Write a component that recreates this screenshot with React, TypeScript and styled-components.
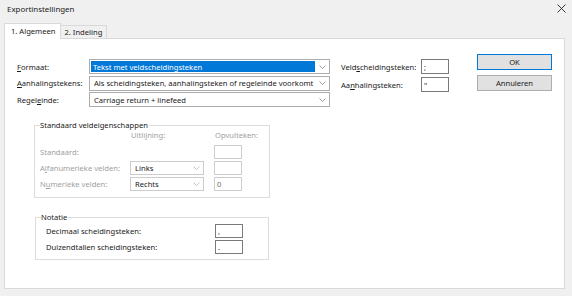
import React from "react";
import styled, { createGlobalStyle } from "styled-components";

const FONT = `"Noto Sans", "Open Sans", sans-serif`;
const FS = "7.6px";

const Global = createGlobalStyle`
  html, body { margin: 0; padding: 0; background: #f0f0f0; }
  body { font-family: ${FONT}; font-size: ${FS}; color: #1a1a1a; }
  * { box-sizing: border-box; }
`;

const Window = styled.div`
  width: 572px;
  height: 296px;
  display: flex;
  flex-direction: column;
  background: #f0f0f0;
  overflow: hidden;
`;

const TitleBar = styled.div`
  height: 19px;
  display: flex;
  align-items: center;
  justify-content: space-between;
  padding: 0 7px 2px 7px;
`;

const Title = styled.span`
  font-size: 7.9px;
`;

const TabStrip = styled.div`
  height: 20px;
  display: flex;
  align-items: flex-end;
  padding-left: 4px;
  margin-bottom: -1px;
  position: relative;
  z-index: 1;
`;

const Tab = styled.div<{ $active?: boolean }>`
  height: ${(p) => (p.$active ? "16px" : "13px")};
  margin-bottom: ${(p) => (p.$active ? "0" : "1px")};
  padding: ${(p) => (p.$active ? "2px 5px 0 6px" : "1px 4px 0 3px")};
  background: ${(p) => (p.$active ? "#fff" : "#f0f0f0")};
  border: 1px solid #d9d9d9;
  border-bottom: none;
  ${(p) => (p.$active ? "" : "border-left: none;")}
  white-space: nowrap;
`;

const Panel = styled.div`
  flex: 1;
  margin: 0 7px 7px 4px;
  background: #fff;
  border: 1px solid #d9d9d9;
  padding: 15px 0 0 12px;
  display: flex;
  flex-direction: column;
`;

const TopSection = styled.div`
  display: flex;
  align-items: flex-start;
`;

const FormGrid = styled.div`
  margin-top: 5px;
  display: grid;
  grid-template-columns: 72px 241px;
  grid-auto-rows: 15px;
  row-gap: 1.5px;
  align-items: center;
`;

const SideGrid = styled.div`
  margin-top: 5px;
  margin-left: 11px;
  display: grid;
  grid-template-columns: 80px 28px;
  grid-auto-rows: 15px;
  row-gap: 3px;
  align-items: center;
`;

const ButtonCol = styled.div`
  margin-left: 28px;
  width: 75px;
  display: flex;
  flex-direction: column;
  gap: 5px;
`;

const Button = styled.div<{ $default?: boolean }>`
  height: 16px;
  display: flex;
  align-items: center;
  justify-content: center;
  background: #e1e1e1;
  border: 1px solid ${(p) => (p.$default ? "#0078d7" : "#adadad")};
`;

const Label = styled.span<{ $disabled?: boolean }>`
  white-space: nowrap;
  color: ${(p) => (p.$disabled ? "#a0a0a0" : "#1a1a1a")};
  u { text-underline-offset: 1px; }
`;

const HeaderLabel = styled(Label)`
  align-self: start;
  padding-left: 1px;
`;

const SelectBox = styled.div<{ $disabled?: boolean }>`
  height: 100%;
  display: flex;
  align-items: center;
  border: 1px solid ${(p) => (p.$disabled ? "#cccccc" : "#acacac")};
  background: #fff;
  padding: 1px 0 1px 1px;
`;

const SelectText = styled.div<{ $highlight?: boolean }>`
  flex: 1;
  height: 100%;
  display: flex;
  align-items: center;
  padding-left: ${(p) => (p.$highlight ? "2px" : "3px")};
  margin-right: ${(p) => (p.$highlight ? "2px" : "0")};
  background: ${(p) => (p.$highlight ? "#0078d7" : "transparent")};
  color: ${(p) => (p.$highlight ? "#fff" : "#1a1a1a")};
  white-space: nowrap;
  overflow: hidden;
`;

const Chevron = styled.svg<{ $disabled?: boolean }>`
  width: 11px;
  height: 6px;
  flex: none;
  margin-right: 1px;
  stroke: ${(p) => (p.$disabled ? "#b8b8b8" : "#8a8a8a")};
`;

const TextBox = styled.div<{ $disabled?: boolean }>`
  height: 100%;
  border: 1px solid ${(p) => (p.$disabled ? "#cccccc" : "#7a7a7a")};
  background: #fff;
  display: flex;
  align-items: center;
  padding-left: 2px;
  color: ${(p) => (p.$disabled ? "#6d6d6d" : "#1a1a1a")};
`;

const Group = styled.fieldset<{ $left: number; $width: number; $top: number }>`
  margin: ${(p) => p.$top}px 0 0 ${(p) => p.$left}px;
  width: ${(p) => p.$width}px;
  border: 1px solid #dcdcdc;
  padding: 0;
  min-inline-size: 0;
`;

const Legend = styled.legend`
  margin-left: 5px;
  padding: 0 1px 0 0;
  line-height: 10px;
  white-space: nowrap;
`;

const GroupGrid1 = styled.div`
  display: grid;
  grid-template-columns: 90px 74px 10px 28px;
  grid-template-rows: 13px 14px 14px 14px;
  row-gap: 2px;
  align-items: center;
  padding: 0 0 6px 5px;
`;

const GroupGrid2 = styled.div`
  display: grid;
  grid-template-columns: 169px 28px;
  grid-template-rows: 14px 14px;
  row-gap: 2px;
  align-items: center;
  padding: 2px 0 5px 10px;
`;

const Select: React.FC<{ text: string; highlight?: boolean; disabled?: boolean }> = ({
  text,
  highlight,
  disabled,
}) => (
  <SelectBox $disabled={disabled}>
    <SelectText $highlight={highlight}>{text}</SelectText>
    <Chevron $disabled={disabled} viewBox="0 0 11 6" fill="none" strokeWidth="0.8">
      <path d="M2.5 1.5 L5.5 4.5 L8.5 1.5" />
    </Chevron>
  </SelectBox>
);

const CloseIcon = styled.svg`
  width: 9px;
  height: 9px;
  margin-right: -1px;
`;

export default function App() {
  return (
    <>
      <Global />
      <Window>
        <TitleBar>
          <Title>Exportinstellingen</Title>
          <CloseIcon viewBox="0 0 9 9" fill="none" stroke="#222" strokeWidth="0.9">
            <path d="M0.5 0.5 L8.5 8.5 M8.5 0.5 L0.5 8.5" />
          </CloseIcon>
        </TitleBar>
        <TabStrip>
          <Tab $active>1. Algemeen</Tab>
          <Tab>2. Indeling</Tab>
        </TabStrip>
        <Panel>
          <TopSection>
            <FormGrid>
              <Label>
                <u>F</u>ormaat:
              </Label>
              <Select text="Tekst met veldscheidingsteken" highlight />
              <Label>
                <u>A</u>anhalingstekens:
              </Label>
              <Select text="Als scheidingsteken, aanhalingsteken of regeleinde voorkomt" />
              <Label>
                Regel<u>e</u>inde:
              </Label>
              <Select text="Carriage return + linefeed" />
            </FormGrid>
            <SideGrid>
              <Label>
                Veld<u>s</u>cheidingsteken:
              </Label>
              <TextBox>;</TextBox>
              <Label>
                Aa<u>n</u>halingsteken:
              </Label>
              <TextBox>"</TextBox>
            </SideGrid>
            <ButtonCol>
              <Button $default>OK</Button>
              <Button>Annuleren</Button>
            </ButtonCol>
          </TopSection>

          <Group $left={17} $width={236} $top={13}>
            <Legend>Standaard veldeigenschappen</Legend>
            <GroupGrid1>
              <span />
              <HeaderLabel $disabled>Uitlijning:</HeaderLabel>
              <span />
              <HeaderLabel $disabled>Opvulteken:</HeaderLabel>

              <Label $disabled>Standaard:</Label>
              <span />
              <span />
              <TextBox $disabled />

              <Label $disabled>
                A<u>l</u>fanumerieke velden:
              </Label>
              <Select text="Links" disabled />
              <span />
              <TextBox $disabled />

              <Label $disabled>
                N<u>u</u>merieke velden:
              </Label>
              <Select text="Rechts" disabled />
              <span />
              <TextBox $disabled>0</TextBox>
            </GroupGrid1>
          </Group>

          <Group $left={18} $width={234} $top={14}>
            <Legend>Notatie</Legend>
            <GroupGrid2>
              <Label>Decimaal scheidingsteken:</Label>
              <TextBox>,</TextBox>
              <Label>Duizendtallen scheidingsteken:</Label>
              <TextBox>.</TextBox>
            </GroupGrid2>
          </Group>
        </Panel>
      </Window>
    </>
  );
}
